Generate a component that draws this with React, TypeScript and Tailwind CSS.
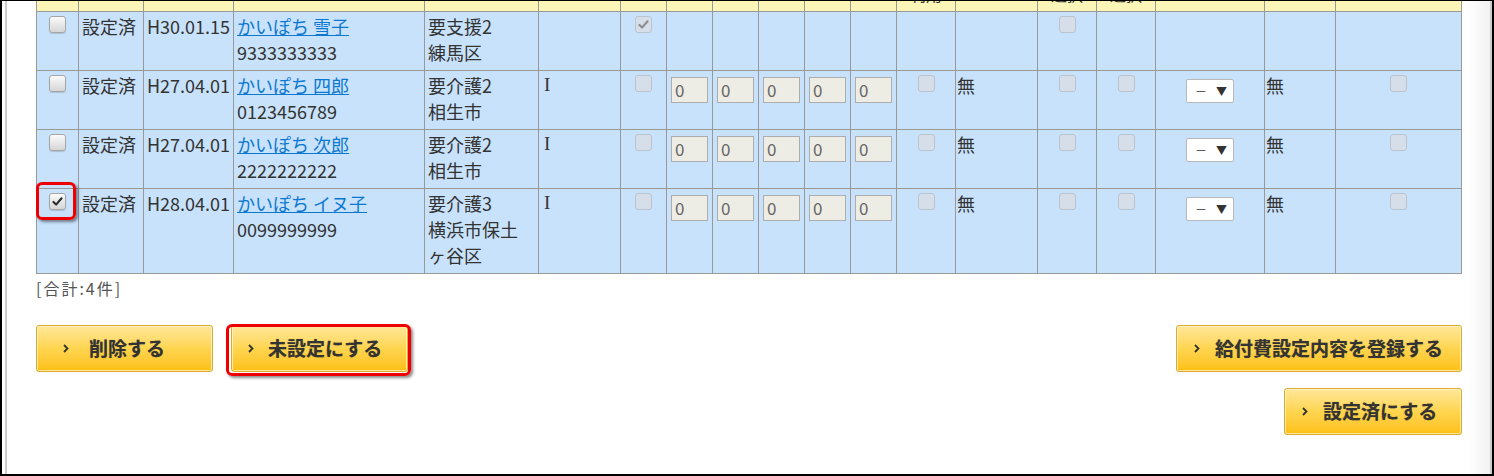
import React from "react";

type Row = {
  checked: boolean;
  date: string;
  name: string;
  no: string;
  care: string;
  city: React.ReactNode;
  full: boolean;
};

const rows: Row[] = [
  { checked: false, date: "H30.01.15", name: "かいぽち 雪子", no: "9333333333", care: "要支援2", city: "練馬区", full: false },
  { checked: false, date: "H27.04.01", name: "かいぽち 四郎", no: "0123456789", care: "要介護2", city: "相生市", full: true },
  { checked: false, date: "H27.04.01", name: "かいぽち 次郎", no: "2222222222", care: "要介護2", city: "相生市", full: true },
  {
    checked: true,
    date: "H28.04.01",
    name: "かいぽち イヌ子",
    no: "0099999999",
    care: "要介護3",
    city: (
      <>
        横浜市保土
        <br />
        ヶ谷区
      </>
    ),
    full: true,
  },
];

const widths = [42, 65, 90, 191, 114, 82, 46, 46, 46, 46, 46, 46, 59, 82, 59, 59, 109, 71, 126];

const heads: Record<number, string> = { 12: "利用", 14: "選択", 15: "選択" };

function Check({ dark }: { dark?: boolean }) {
  return (
    <svg viewBox="0 0 16 16" className="w-[13px] h-[13px]">
      <path
        d="M3 8.5 L6.3 11.8 L13 4"
        fill="none"
        stroke={dark ? "#2b2b2b" : "#8d8d8d"}
        strokeWidth="2.6"
        strokeLinecap="round"
        strokeLinejoin="round"
      />
    </svg>
  );
}

function Box({ enabled, checked }: { enabled?: boolean; checked?: boolean }) {
  if (enabled) {
    return (
      <span className="mx-auto mt-[3px] flex h-[17px] w-[17px] items-center justify-center rounded-[3px] border border-[#a6a6a6] bg-gradient-to-b from-[#fbfbfb] to-[#d6d6d6] shadow-[0_1px_1px_rgba(0,0,0,0.15)]">
        {checked && <Check dark />}
      </span>
    );
  }
  return (
    <span className="mx-auto mt-[3px] flex h-[17px] w-[17px] items-center justify-center rounded-[3px] border border-[#b9c4cf] bg-[#d6dfe9]">
      {checked && <Check />}
    </span>
  );
}

function Num() {
  return (
    <div className="ml-[4px] mt-[6px] h-[26px] w-[37px] border border-[#adadad] bg-[#edece5] pl-[3px] text-[17px] leading-[24px] text-[#666]">
      0
    </div>
  );
}

function Pick() {
  return (
    <div className="mx-auto mt-[7px] flex h-[24px] w-[48px] items-center rounded-[2px] border border-[#b8b8b8] bg-white pl-[8px] text-[12px] text-[#333]">
      <span>－</span>
      <span className="ml-[9px] text-[11px]">▼</span>
    </div>
  );
}

function Arrow() {
  return (
    <svg viewBox="0 0 6 9" className="h-[9px] w-[6px] shrink-0">
      <path d="M1 1 L4.5 4.5 L1 8" fill="none" stroke="#333" strokeWidth="1.8" />
    </svg>
  );
}

function Btn({ label, w, pad, gap }: { label: string; w: string; pad: string; gap: string }) {
  return (
    <button
      className={`flex h-[47px] items-center rounded-[3px] border border-[#dcaa2c] bg-gradient-to-b from-[#ffe797] via-[#ffd54f] to-[#fdc00c] text-[19px] font-bold text-[#333] shadow-[inset_0_0_0_1px_rgba(255,250,220,0.7)] [text-shadow:0_0_1px_rgba(0,0,0,0.35)] ${w} ${pad} ${gap}`}
    >
      <Arrow />
      <span>{label}</span>
    </button>
  );
}

const td = "border border-[#999] align-top pt-[1px] pb-[5px] px-[3px]";

export default function App() {
  return (
    <div
      className="flex h-[476px] w-[1494px] overflow-hidden border-b-2 border-l-2 border-r-2 border-t border-black bg-white text-[#333]"
      style={{ fontFamily: '"Noto Sans CJK JP", "Noto Sans", sans-serif' }}
    >
      <div className="w-[3px] shrink-0" />
      <div className="w-[2px] shrink-0 bg-[#cdcdcd]" />
      <main className="flex-1 pl-[29px] pr-[6px]">
        <div className="overflow-hidden">
          <table className="-mt-[30px] w-[1426px] table-fixed border-collapse text-[18px] leading-[26px]">
            <colgroup>
              {widths.map((w, i) => (
                <col key={i} style={{ width: w }} />
              ))}
            </colgroup>
            <thead>
              <tr className="h-[40px] bg-[#fbf6b8]">
                {widths.map((_, i) => (
                  <th key={i} className="border border-[#999] pb-[7px] align-bottom text-[16px] font-normal leading-[20px]">
                    {heads[i] ?? ""}
                  </th>
                ))}
              </tr>
            </thead>
            <tbody className="bg-[#c8e2fc]">
              {rows.map((r, i) => (
                <tr key={i}>
                  <td className={td}>
                    {r.checked ? (
                      <span className="relative mx-auto block w-[17px]">
                        <Box enabled checked />
                        <span className="absolute -bottom-[10px] -left-[13px] -right-[10px] -top-[11px] rounded-[6px] border-[3px] border-[#ee0000] shadow-[2px_2px_3px_rgba(0,0,0,0.45)]" />
                      </span>
                    ) : (
                      <Box enabled />
                    )}
                  </td>
                  <td className={td}>設定済</td>
                  <td className={td}>{r.date}</td>
                  <td className={td}>
                    <a href="#" className="text-[#0b78d0] underline">
                      {r.name}
                    </a>
                    <div>{r.no}</div>
                  </td>
                  <td className={td}>
                    <div>{r.care}</div>
                    <div>{r.city}</div>
                  </td>
                  <td
                    className={`${td} pl-[5px] text-[19px]`}
                    style={{ fontFamily: '"Liberation Serif", serif' }}
                  >
                    {r.full ? "I" : ""}
                  </td>
                  <td className={td}>
                    <Box checked={!r.full} />
                  </td>
                  {[0, 1, 2, 3, 4].map((k) => (
                    <td key={k} className="border border-[#999] p-0 align-top">
                      {r.full && <Num />}
                    </td>
                  ))}
                  <td className={td}>{r.full && <Box />}</td>
                  <td className={`${td} pl-[1px]`}>{r.full ? "無" : ""}</td>
                  <td className={td}>
                    <Box />
                  </td>
                  <td className={td}>{r.full && <Box />}</td>
                  <td className={td}>{r.full && <Pick />}</td>
                  <td className={`${td} pl-[1px]`}>{r.full ? "無" : ""}</td>
                  <td className={td}>{r.full && <Box />}</td>
                </tr>
              ))}
            </tbody>
          </table>
        </div>
        <p className="mt-[3px] text-[16px] leading-[22px] tracking-[2px] text-[#555]">[合計:4件]</p>
        <div className="mt-[26px] flex items-start justify-between">
          <div className="flex gap-[18px]">
            <Btn label="削除する" w="w-[177px]" pad="pl-[26px]" gap="gap-[20px]" />
            <div className="relative">
              <Btn label="未設定にする" w="w-[177px]" pad="pl-[16px]" gap="gap-[14px]" />
              <span className="absolute -bottom-[4px] -left-[5px] -right-[3px] -top-[1px] rounded-[6px] border-[3px] border-[#ee0000] shadow-[2px_2px_3px_rgba(0,0,0,0.45)]" />
            </div>
          </div>
          <div className="flex flex-col items-end gap-[16px]">
            <Btn label="給付費設定内容を登録する" w="w-[286px]" pad="pl-[17px]" gap="gap-[15px]" />
            <Btn label="設定済にする" w="w-[178px]" pad="pl-[17px]" gap="gap-[15px]" />
          </div>
        </div>
      </main>
      <div className="w-[22px] shrink-0 bg-gradient-to-r from-white to-[#f2f2f2]" />
      <div className="w-[2px] shrink-0 bg-[#cdcdcd]" />
    </div>
  );
}
